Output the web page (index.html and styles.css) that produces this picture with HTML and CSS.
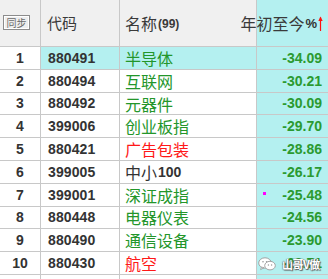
FILE: index.html
```html
<!DOCTYPE html>
<html lang="zh">
<head>
<meta charset="utf-8">
<link rel="stylesheet" href="styles.css">
</head>
<body>
<div class="board">
  <div class="grid">
    <div class="cell hd c0"><span class="sync">同步</span></div>
    <div class="cell hd c1">代码</div>
    <div class="cell hd c2">名称<b class="cnt">(99)</b></div>
    <div class="cell hd c3"><span class="hdr-r">年初至今<b class="pct">%</b><svg class="arrow" width="5" height="15" viewBox="0 0 5 15"><path d="M2.5 1.5 V15" stroke="#ff1010" stroke-width="1.2"/><path d="M0.3 5 L2.5 0.5 L4.7 5 Z" fill="#ff1010"/></svg></span></div>

    <div class="cell c0 idx">1</div>
    <div class="cell c1 code sel">880491</div>
    <div class="cell c2 name green sel">半导体</div>
    <div class="cell c3 val">-34.09</div>

    <div class="cell c0 idx">2</div>
    <div class="cell c1 code">880494</div>
    <div class="cell c2 name green">互联网</div>
    <div class="cell c3 val">-30.21</div>

    <div class="cell c0 idx">3</div>
    <div class="cell c1 code">880492</div>
    <div class="cell c2 name green">元器件</div>
    <div class="cell c3 val">-30.09</div>

    <div class="cell c0 idx">4</div>
    <div class="cell c1 code">399006</div>
    <div class="cell c2 name green">创业板指</div>
    <div class="cell c3 val">-29.70</div>

    <div class="cell c0 idx">5</div>
    <div class="cell c1 code">880421</div>
    <div class="cell c2 name red">广告包装</div>
    <div class="cell c3 val">-28.86</div>

    <div class="cell c0 idx">6</div>
    <div class="cell c1 code">399005</div>
    <div class="cell c2 name dark">中小<b class="num">100</b></div>
    <div class="cell c3 val">-26.17</div>

    <div class="cell c0 idx">7</div>
    <div class="cell c1 code">399001</div>
    <div class="cell c2 name green">深证成指</div>
    <div class="cell c3 val"><span class="mark"></span>-25.48</div>

    <div class="cell c0 idx">8</div>
    <div class="cell c1 code">880448</div>
    <div class="cell c2 name green">电器仪表</div>
    <div class="cell c3 val">-24.56</div>

    <div class="cell c0 idx">9</div>
    <div class="cell c1 code">880490</div>
    <div class="cell c2 name green">通信设备</div>
    <div class="cell c3 val">-23.90</div>

    <div class="cell c0 idx">10</div>
    <div class="cell c1 code">880430</div>
    <div class="cell c2 name red">航空</div>
    <div class="cell c3 val">-23.71</div>

    <div class="cell c0"></div>
    <div class="cell c1"></div>
    <div class="cell c2"></div>
    <div class="cell c3"></div>
  </div>

  <div class="watermark">
    <svg class="wx" width="18" height="14" viewBox="0 0 18 14">
      <ellipse cx="7" cy="6" rx="6.3" ry="5.2" fill="#fff" stroke="#9a9a9a" stroke-width="0.9"/>
      <path d="M3.5 10 L2.6 12.6 L6 10.8 Z" fill="#fff" stroke="#9a9a9a" stroke-width="0.8"/>
      <ellipse cx="12" cy="8.6" rx="5.3" ry="4.3" fill="#fff" stroke="#9a9a9a" stroke-width="0.9"/>
      <circle cx="5" cy="4.8" r="0.8" fill="#9a9a9a"/>
      <circle cx="8.6" cy="4.8" r="0.8" fill="#9a9a9a"/>
      <circle cx="10.4" cy="8" r="0.7" fill="#9a9a9a"/>
      <circle cx="13.6" cy="8" r="0.7" fill="#9a9a9a"/>
    </svg>
    <span class="wm-text">山哥V做</span>
  </div>
</div>
</body>
</html>
```
FILE: styles.css
```css
html, body {
  margin: 0;
  padding: 0;
  background: #ffffff;
  overflow: hidden;
}

.board {
  position: relative;
  width: 328px;
  height: 279px;
  overflow: hidden;
}

.grid {
  display: grid;
  grid-template-columns: 41px 79px 137px 71px;
  grid-template-rows: 47px repeat(11, 22.8px);
}

.cell {
  box-sizing: border-box;
  display: flex;
  align-items: center;
  white-space: nowrap;
  border-right: 1px solid #c8c8c8;
  border-bottom: 1px solid #c8c8c8;
  color: #333333;
  min-width: 0;
}

.c3 {
  border-right: none;
  background: #b4f0f0;
  justify-content: flex-end;
  padding-right: 6px;
  position: relative;
}

.sel {
  background: #b4f0f0;
}

.hd {
  background: #f0f0f0;
  font-family: "Noto Sans CJK SC", "Noto Sans", sans-serif;
  font-size: 16px;
  color: #3a3a3a;
  padding-bottom: 1px;
}

.hd.c1 {
  padding-left: 6px;
  font-size: 15px;
}

.hd.c2 {
  padding-left: 5px;
}

.hd.c3 {
  background: #b4f0f0;
  padding-right: 5px;
}

.hd.c0 {
  padding-left: 3px;
}

.sync {
  display: inline-block;
  box-sizing: border-box;
  width: 27px;
  height: 15px;
  border: 1px solid #8c8c8c;
  box-shadow: inset 0 0 0 1px #ffffff;
  background: #eeeeee;
  font-size: 10px;
  line-height: 13px;
  text-align: center;
  color: #6a6a6a;
  letter-spacing: 0;
}

.cnt {
  font-family: "Liberation Sans", Arial, sans-serif;
  font-size: 12px;
  font-weight: bold;
  margin-left: 1px;
  margin-top: 2px;
}

.hdr-r {
  display: flex;
  align-items: center;
}

.pct {
  font-family: "Liberation Sans", Arial, sans-serif;
  font-size: 13px;
  font-weight: bold;
  color: #333333;
  margin-left: 1px;
  margin-top: 2px;
}

.arrow {
  display: block;
  margin-left: 1px;
  margin-top: 1px;
}

.idx {
  justify-content: center;
  font-family: "Liberation Sans", Arial, sans-serif;
  font-weight: bold;
  font-size: 14px;
}

.code {
  padding-left: 7px;
  font-family: "Liberation Sans", Arial, sans-serif;
  font-weight: bold;
  font-size: 14px;
  letter-spacing: 0.1px;
}

.name {
  padding-left: 5px;
  font-family: "Noto Sans CJK SC", "Noto Sans", sans-serif;
  font-size: 16px;
}

.green {
  color: #23962a;
}

.red {
  color: #ff1818;
}

.dark {
  color: #333333;
}

.num {
  font-family: "Liberation Sans", Arial, sans-serif;
  font-weight: bold;
  font-size: 14px;
  margin-left: 1px;
}

.val {
  font-family: "Liberation Sans", Arial, sans-serif;
  font-weight: bold;
  font-size: 14px;
  color: #2b9a30;
}

.mark {
  position: absolute;
  left: 6px;
  top: 8px;
  width: 3px;
  height: 3px;
  background: #ff00ff;
}

.watermark {
  position: absolute;
  left: 258px;
  top: 256px;
  display: flex;
  align-items: center;
  gap: 6px;
}

.wx {
  display: block;
}

.wm-text {
  font-family: "Noto Sans CJK SC", "Noto Sans", sans-serif;
  font-size: 11px;
  font-weight: bold;
  color: #ffffff;
  text-shadow: 0 0 1px #555, 0 0 1px #555, 1px 1px 1px #666;
  letter-spacing: -0.5px;
}
```
